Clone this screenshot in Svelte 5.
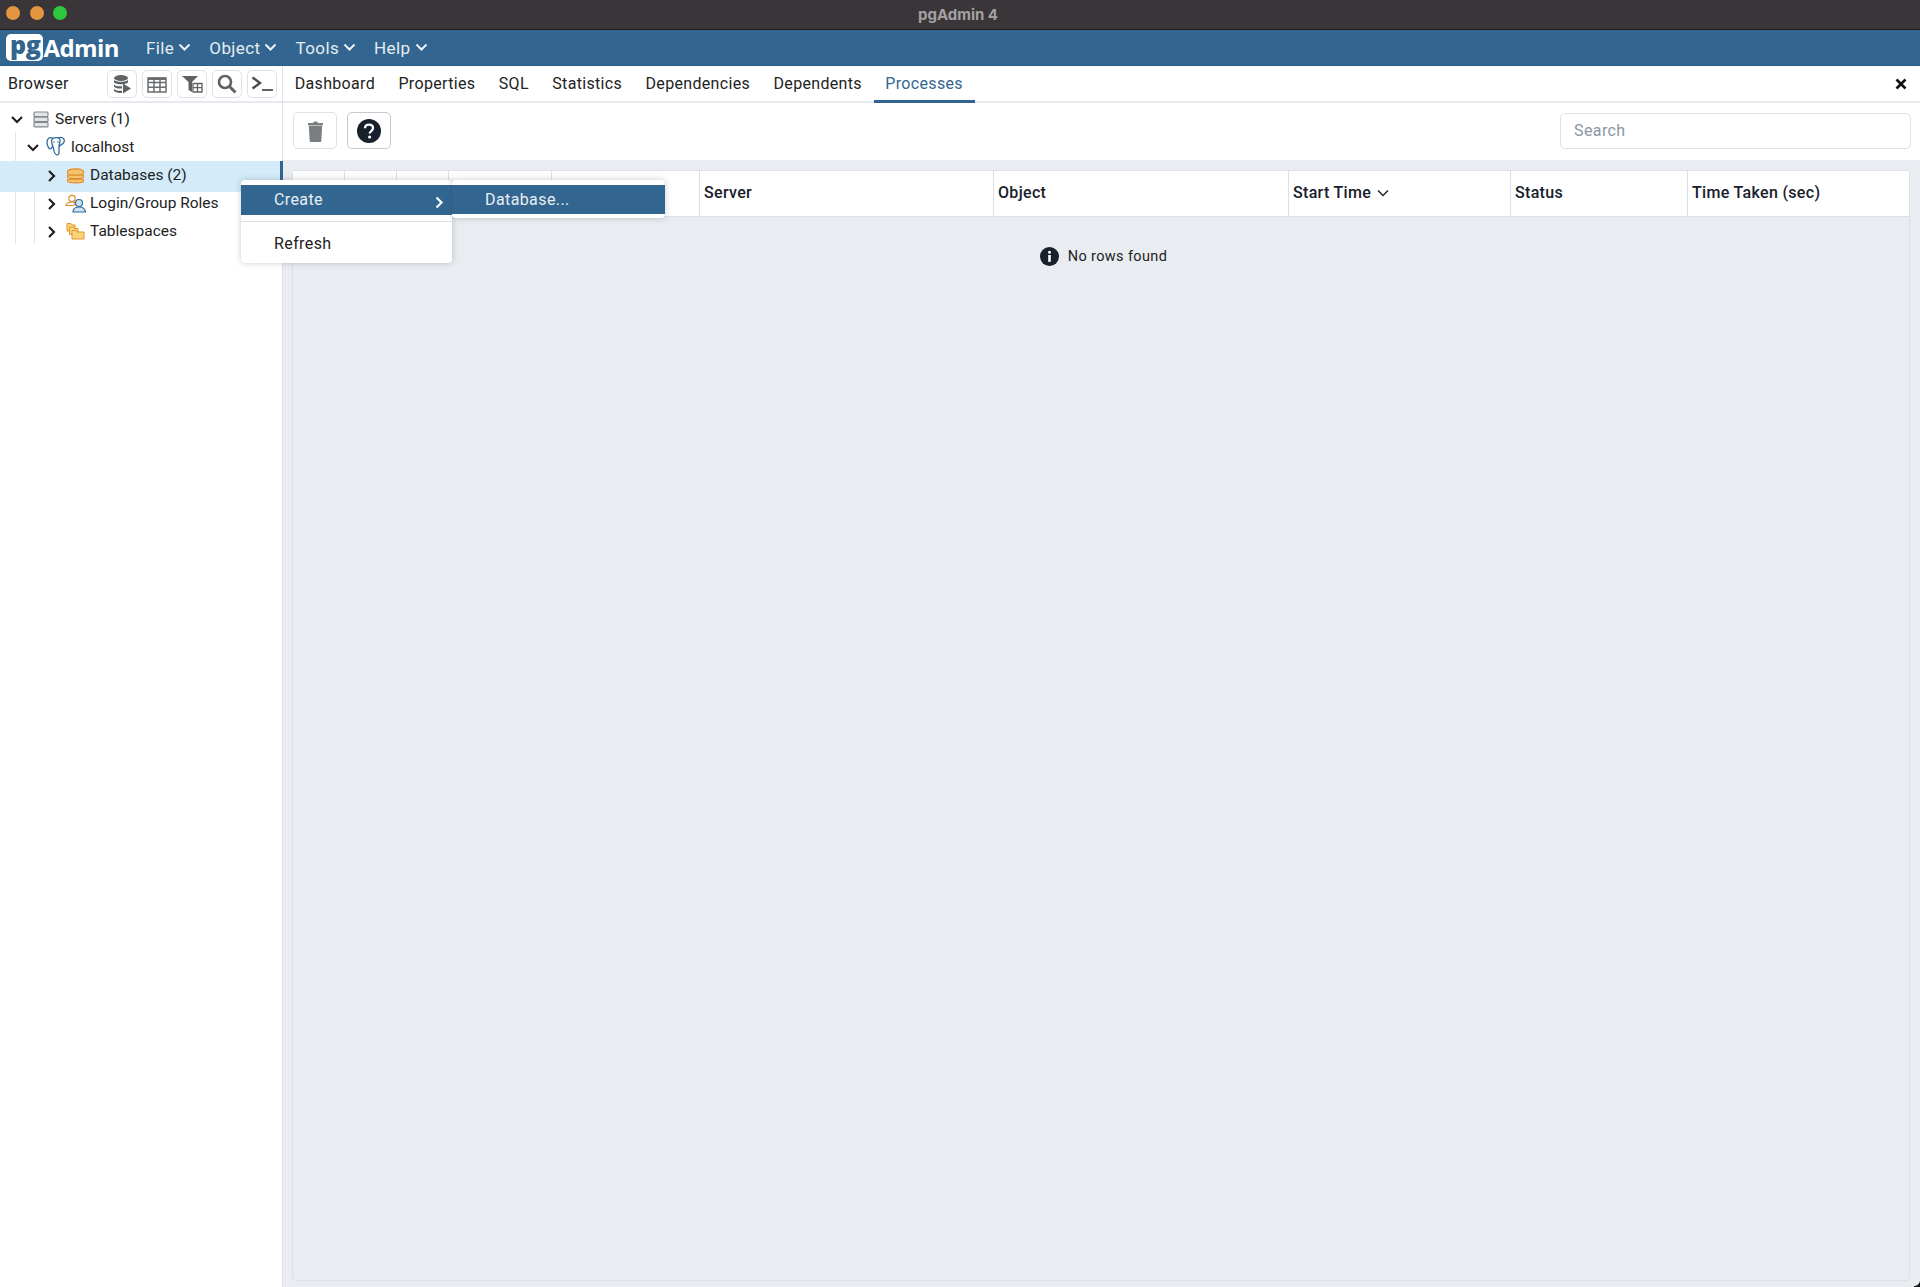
<script lang="ts">
  const menus = ["File", "Object", "Tools", "Help"];
  const tabs = ["Dashboard", "Properties", "SQL", "Statistics", "Dependencies", "Dependents", "Processes"];
  const columns = ["", "", "", "", "", "Server", "Object", "Start Time", "Status", "Time Taken (sec)"];
</script>

<div class="window">
  <header class="titlebar">
    <div class="lights">
      <span class="light orange"></span>
      <span class="light orange"></span>
      <span class="light green"></span>
    </div>
    <span class="title">pgAdmin 4</span>
  </header>

  <nav class="navbar">
    <div class="logo"><span class="pg">pg</span><span class="admin">Admin</span></div>
    <div class="menus">
      {#each menus as menu}
        <span class="menu">
          {menu}
          <svg width="13" height="9" viewBox="0 0 13 9"><path d="M1.500 1.500 6.500 6.500 11.500 1.500" fill="none" stroke="#eef2f5" stroke-width="2"/></svg>
        </span>
      {/each}
    </div>
  </nav>

  <div class="main">
    <aside class="browser">
      <div class="browser-head">
        <span class="browser-title">Browser</span>
        <div class="tools">
          <button class="tool" aria-label="Query tool">
            <svg width="20" height="20" viewBox="0 0 20 20" fill="#5f6265">
              <ellipse cx="9" cy="4" rx="7" ry="3"/>
              <path d="M2 6c2 2.400 12 2.400 14 0v2.500c-2 2.400-12 2.400-14 0zM2 10.500c1.500 1.700 5 2 8 1.800v2.200c-3 .3-6.500-.2-8-1.800zM2 15c1.500 1.500 5 2 8 1.800V19c-3 .2-6.500-.6-8-2z"/>
              <path d="M11 9.500 19 14.500 11 19.500z"/>
            </svg>
          </button>
          <button class="tool" aria-label="View data">
            <svg width="20" height="18" viewBox="0 0 20 18"><path d="M1 3h18v14H1zM1 7.500h18M1 12.200h18M7 3v14M13 3v14" fill="none" stroke="#6a6d70" stroke-width="1.500"/><path d="M1 2.500h18v2.500H1z" fill="#6a6d70"/></svg>
          </button>
          <button class="tool" aria-label="Filtered rows">
            <svg width="21" height="18" viewBox="0 0 21 18"><path d="M0 1h16L10 7v10L6.500 15V7z" fill="#5f6265"/><path d="M11 8.500h9v8.500h-9zM11 12.700h9M15.500 8.500V17" fill="#fff" stroke="#5f6265" stroke-width="1.300"/></svg>
          </button>
          <button class="tool" aria-label="Search objects">
            <svg width="20" height="20" viewBox="0 0 20 20"><circle cx="8" cy="8" r="6" fill="none" stroke="#5f6265" stroke-width="2.600"/><path d="M12.500 12.500 18.500 18.500" stroke="#5f6265" stroke-width="3"/></svg>
          </button>
          <button class="tool" aria-label="PSQL tool">
            <svg width="22" height="16" viewBox="0 0 22 16"><path d="M1.500 1.500 9 7 1.500 12.500" fill="none" stroke="#4a4d50" stroke-width="2.400"/><path d="M11 14h11" stroke="#5f6265" stroke-width="2"/></svg>
          </button>
        </div>
      </div>

      <div class="tree">
        <span class="guide guide-a"></span>
        <span class="guide guide-b"></span>

        <div class="row depth-0">
          <svg class="twist" width="14" height="10" viewBox="0 0 14 10"><path d="M2 2 7 7 12 2" fill="none" stroke="#222" stroke-width="2.200"/></svg>
          <svg class="icon" width="16" height="17" viewBox="0 0 16 17">
            <g fill="#e3e5e7" stroke="#85898d" stroke-width="1.200">
              <rect x="1" y="1" width="14" height="4.500" rx="1"/>
              <rect x="1" y="6.200" width="14" height="4.500" rx="1"/>
              <rect x="1" y="11.400" width="14" height="4.500" rx="1"/>
            </g>
          </svg>
          <span>Servers (1)</span>
        </div>

        <div class="row depth-1">
          <svg class="twist" width="14" height="10" viewBox="0 0 14 10"><path d="M2 2 7 7 12 2" fill="none" stroke="#222" stroke-width="2.200"/></svg>
          <svg class="icon elephant" width="19" height="20" viewBox="0 0 19 20">
            <g fill="#fff" stroke="#336b9c" stroke-width="1.300" stroke-linejoin="round">
              <path d="M6.500 2C3 .8.800 3 1 6.500c.2 3 1.600 6.500 3.400 6.300 1.200-.1 1.700-1.400 2.300-2.600z"/>
              <path d="M12 1.800c2.800-1 6-.3 6.300 2.300.2 2.300-1.600 4-4 5.300-.6.300-1 .5-1 1.400z"/>
              <path d="M5.500 5c0-2.500 3-4 6.500-3.200 2 .5 2.500 2.600 1.800 4.700-.5 1.500-.8 3-.8 4.500v5c0 1.800-.8 3-2.100 2.800-2-.3-2.700-2.600-3.100-4.800-.3-2-.9-3.500-1.600-5.500-.4-1.200-.7-2.200-.7-3.500z"/>
            </g>
            <circle cx="8" cy="6" r=".8" fill="#336b9c"/>
            <circle cx="12" cy="6" r=".8" fill="#336b9c"/>
          </svg>
          <span>localhost</span>
        </div>

        <div class="row depth-2 selected">
          <svg class="twist" width="10" height="14" viewBox="0 0 10 14"><path d="M2 2 7 7 2 12" fill="none" stroke="#222" stroke-width="2.200"/></svg>
          <svg class="icon" width="17" height="17" viewBox="0 0 17 16">
            <g fill="#f3c56b" stroke="#e08a2e" stroke-width="1.100">
              <path d="M1 12c0-1 15-1 15 0v1.500c0 2-15 2-15 0z"/>
              <path d="M1 8c0-1 15-1 15 0v1.500c0 2-15 2-15 0z"/>
              <path d="M1 4.500C1 .8 16 .8 16 4.500V6c0 2-15 2-15 0z"/>
            </g>
          </svg>
          <span>Databases (2)</span>
        </div>

        <div class="row depth-2">
          <svg class="twist" width="10" height="14" viewBox="0 0 10 14"><path d="M2 2 7 7 2 12" fill="none" stroke="#222" stroke-width="2.200"/></svg>
          <svg class="icon" width="21" height="19" viewBox="0 0 21 19">
            <circle cx="7" cy="4.500" r="3.200" fill="#fff" stroke="#e08a2e" stroke-width="1.200"/>
            <path d="M1 11.500c.5-2.500 3-3.500 6-3.500 1.500 0 2.500.3 3.500 1l-2 2.500z" fill="#fff" stroke="#e08a2e" stroke-width="1.200"/>
            <circle cx="14" cy="9" r="3.500" fill="#cfe2f1" stroke="#336b9c" stroke-width="1.200"/>
            <path d="M8 18c0-3.500 2.500-5 6-5s6 1.500 6.500 5z" fill="#cfe2f1" stroke="#336b9c" stroke-width="1.200"/>
          </svg>
          <span>Login/Group Roles</span>
        </div>

        <div class="row depth-2">
          <svg class="twist" width="10" height="14" viewBox="0 0 10 14"><path d="M2 2 7 7 2 12" fill="none" stroke="#222" stroke-width="2.200"/></svg>
          <svg class="icon" width="19" height="18" viewBox="0 0 19 18">
            <path d="M1 3V1.500h4L6 3h3v6H1z" fill="#f6d67a" stroke="#e8962f" stroke-width="1"/>
            <path d="M3.500 6.500V5h4l1 1.500h3.500v6h-8.500z" fill="#f6d67a" stroke="#e8962f" stroke-width="1"/>
            <path d="M6 10V8.500h4l1 1.500h7v7H6z" fill="#f6d67a" stroke="#e8962f" stroke-width="1"/>
          </svg>
          <span>Tablespaces</span>
        </div>
      </div>
    </aside>

    <section class="panel">
      <div class="tabbar">
        {#each tabs as tab}
          <span class="tab" class:active={tab === "Processes"}>{tab}</span>
        {/each}
        <svg class="close" width="12" height="12" viewBox="0 0 12 12"><path d="M1.500 1.500 10.500 10.500M10.500 1.500 1.500 10.500" stroke="#111" stroke-width="2.600"/></svg>
      </div>

      <div class="toolbar">
        <button class="action" aria-label="Delete">
          <svg width="17" height="22" viewBox="0 0 17 22" fill="#7b7e81"><path d="M1 3h5L7 1.500h3L11 3h5v2.200H1zM1.800 5.800h13.400l-.9 15.200c0 .5-.5 1-1 1H3.700c-.5 0-1-.5-1-1z"/></svg>
        </button>
        <button class="action help" aria-label="Help">
          <svg width="24" height="24" viewBox="0 0 24 24">
            <circle cx="12" cy="12" r="12" fill="#17202b"/>
            <path d="M8 9.300C8 7 9.800 5.700 12 5.700c2.300 0 4 1.300 4 3.400 0 3-3.300 2.900-3.300 5.500" fill="none" stroke="#fff" stroke-width="2.300"/>
            <circle cx="12.600" cy="18" r="1.600" fill="#fff"/>
          </svg>
        </button>
        <input class="search" placeholder="Search" />
      </div>

      <div class="content">
        <div class="table">
          <div class="thead">
            {#each columns as col}
              <div class="th">
                {col}
                {#if col === "Start Time"}
                  <svg width="12" height="8" viewBox="0 0 12 8"><path d="M1 1.500 6 6.500 11 1.500" fill="none" stroke="#222" stroke-width="1.500"/></svg>
                {/if}
              </div>
            {/each}
          </div>
          <div class="empty">
            <svg width="19" height="19" viewBox="0 0 19 19">
              <circle cx="9.500" cy="9.500" r="9.500" fill="#17202b"/>
              <circle cx="9.500" cy="5.200" r="1.500" fill="#fff"/>
              <path d="M8.200 8h2.600v6.800H8.200z" fill="#fff"/>
            </svg>
            <span>No rows found</span>
          </div>
        </div>
      </div>
    </section>
  </div>

  <div class="context">
    <div class="item active first">Create
      <svg width="9" height="13" viewBox="0 0 9 13"><path d="M1.500 1.500 6.500 6.500 1.500 11.500" fill="none" stroke="#fff" stroke-width="2.200"/></svg>
    </div>
    <div class="sep"></div>
    <div class="item">Refresh</div>
  </div>
  <div class="context sub">
    <div class="item active">Database...</div>
  </div>

  <span class="corner"></span>
</div>

<style>
  :global(body) {
    margin: 0;
    background: #fff;
  }

  .window {
    position: relative;
    display: flex;
    flex-direction: column;
    height: 1287px;
    overflow: hidden;
    font-family: Roboto, "Liberation Sans", sans-serif;
    font-size: 15.5px;
    color: #222;
  }

  .titlebar {
    position: relative;
    flex: 0 0 29px;
    display: flex;
    align-items: center;
    justify-content: center;
    background: #3a3538;
    border-bottom: 1px solid #1e1c1e;
  }

  .lights {
    position: absolute;
    left: 6px;
    top: 6px;
    display: flex;
    gap: 9.5px;
  }

  .light {
    width: 14px;
    height: 14px;
    border-radius: 50%;
  }

  .light.orange {
    background: #e3963f;
  }

  .light.green {
    background: #2ec83f;
  }

  .title {
    margin-left: -4px;
    font-family: Inter, "Liberation Sans", sans-serif;
    font-size: 15px;
    font-weight: 700;
    color: #a5a1a3;
  }

  .navbar {
    flex: 0 0 36px;
    display: flex;
    align-items: center;
    background: #326690;
    border-bottom: 1px solid #2b5a80;
    box-sizing: border-box;
    padding-left: 6px;
  }

  .logo {
    display: flex;
    align-items: center;
    width: 140px;
    font-family: "Open Sans", sans-serif;
    font-weight: 700;
    letter-spacing: -0.4px;
    color: #fff;
  }

  .pg {
    padding: 0 3px 4px 4px;
    height: 23px;
    line-height: 20px;
    font-size: 25px;
    font-weight: 800;
    border-radius: 5px;
    background: #fff;
    color: #326690;
  }

  .admin {
    font-size: 24px;
    line-height: 28px;
    letter-spacing: -0.6px;
  }

  .menus {
    display: flex;
    gap: 18px;
  }

  .menu {
    display: flex;
    align-items: center;
    gap: 4px;
    font-size: 17px;
    letter-spacing: 0.4px;
    color: #e6ecf1;
  }

  .main {
    flex: 1;
    display: flex;
    min-height: 0;
  }

  .browser {
    flex: 0 0 283px;
    box-sizing: border-box;
    border-right: 1px solid #dde2e8;
  }

  .browser-head {
    height: 37px;
    box-sizing: border-box;
    display: flex;
    align-items: center;
    justify-content: space-between;
    padding: 0 5px 0 8px;
    border-bottom: 2px solid #e6e9ee;
  }

  .browser-title {
    font-size: 16px;
    letter-spacing: 0.3px;
  }

  .tools {
    display: flex;
    gap: 5px;
  }

  .tool {
    width: 30px;
    height: 28px;
    padding: 0;
    display: flex;
    align-items: center;
    justify-content: center;
    background: #fff;
    border: 1px solid #dde2e8;
    border-radius: 5px;
  }

  .tree {
    position: relative;
    padding-top: 2px;
  }

  .guide {
    position: absolute;
    top: 29px;
    height: 112px;
    border-left: 1px solid #e2e6ea;
  }

  .guide-a {
    left: 15px;
  }

  .guide-b {
    left: 34px;
    top: 57px;
    height: 84px;
  }

  .row {
    position: relative;
    height: 28px;
    display: flex;
    align-items: center;
    box-sizing: border-box;
  }

  .depth-0 {
    padding-left: 10px;
  }

  .depth-1 {
    padding-left: 26px;
  }

  .depth-2 {
    padding-left: 47px;
  }

  .twist {
    flex: none;
    margin-top: 2px;
  }

  .icon {
    flex: none;
  }

  .depth-0 .icon {
    margin: 0 6px 0 9px;
  }

  .depth-1 .icon {
    margin: -2px 6px 0 6px;
  }

  .depth-2 .icon {
    width: 21px;
    margin: 0 4px 0 8px;
  }

  .selected {
    height: 31px;
    padding-bottom: 3px;
    margin: 0 -1px -3px 0;
    background: #d4ecf9;
    border-right: 3px solid #326690;
  }

  .panel {
    flex: 1;
    display: flex;
    flex-direction: column;
    min-width: 0;
  }

  .tabbar {
    height: 37px;
    box-sizing: border-box;
    display: flex;
    align-items: stretch;
    border-bottom: 2px solid #e6e9ee;
  }

  .tab {
    display: flex;
    align-items: center;
    padding: 1px 11.7px 0;
    margin-bottom: -2px;
    border-bottom: 3px solid transparent;
    font-size: 16px;
    letter-spacing: 0.33px;
    color: #222;
  }

  .tab.active {
    color: #326690;
    border-bottom-color: #326690;
  }

  .close {
    margin: auto 13px auto auto;
  }

  .toolbar {
    height: 57px;
    box-sizing: border-box;
    display: flex;
    align-items: center;
    gap: 10px;
    padding: 0 9px 2px 10px;
  }

  .action {
    width: 44px;
    height: 37px;
    padding: 0;
    display: flex;
    align-items: center;
    justify-content: center;
    background: #fff;
    border: 1px solid #dde2e8;
    border-radius: 5px;
  }

  .action.help {
    border-color: #c3cbd4;
  }

  .search {
    width: 351px;
    height: 36px;
    margin-left: auto;
    box-sizing: border-box;
    padding: 0 12px 0 13px;
    font: inherit;
    font-size: 16px;
    letter-spacing: 0.4px;
    border: 1px solid #dde2e8;
    border-radius: 5px;
    outline: none;
  }

  .search::placeholder {
    color: #8a96a3;
  }

  .content {
    flex: 1;
    min-height: 0;
    display: flex;
    padding: 10px 10px 6px 9px;
    background: #e9ecf1;
  }

  .table {
    flex: 1;
    border: 1px solid #dde1e6;
    border-radius: 4px;
  }

  .thead {
    display: grid;
    grid-template-columns: 52px 52px 52px 103px 148px 294px 295px 222px 177px 1fr;
    height: 46px;
    padding-bottom: 2px;
    background: #fff;
    border-bottom: 1px solid #dde1e6;
    box-sizing: border-box;
  }

  .th {
    display: flex;
    align-items: center;
    gap: 6px;
    padding-left: 4px;
    margin-bottom: -2px;
    padding-bottom: 2px;
    font-weight: 500;
    font-size: 16px;
    letter-spacing: 0.32px;
    color: #17202b;
    border-right: 1px solid #dde1e6;
  }

  .th:last-child {
    border-right: none;
  }

  .empty {
    display: flex;
    align-items: center;
    justify-content: center;
    gap: 9px;
    margin-top: 30px;
    padding-left: 5px;
    font-size: 14.5px;
    letter-spacing: 0.38px;
    color: #222;
  }

  .context {
    position: absolute;
    left: 241px;
    top: 180px;
    width: 211px;
    height: 83px;
    box-sizing: border-box;
    padding-top: 5px;
    background: #fff;
    border-radius: 4px;
    box-shadow: 0 0 6px rgba(60, 70, 85, 0.28);
  }

  .context.sub {
    left: 452px;
    width: 213px;
    height: 38px;
  }

  .item {
    position: relative;
    height: 30px;
    display: flex;
    align-items: center;
    padding: 0 0 1px 33px;
    box-sizing: border-box;
    font-size: 16px;
    letter-spacing: 0.4px;
    color: #222;
  }

  .item.active {
    background: #326690;
    color: #e8eef3;
  }

  .item svg {
    position: absolute;
    right: 8px;
    top: 11px;
  }

  .sub .item {
    height: 29px;
  }

  .sep {
    margin: 6px 0 7px;
    border-top: 1px solid #dde1e6;
  }

  .corner {
    position: absolute;
    right: 0;
    bottom: 0;
    width: 6px;
    height: 7px;
    background: radial-gradient(circle at 0 0, transparent 5.5px, #1a1a1c 6.5px);
  }
</style>
